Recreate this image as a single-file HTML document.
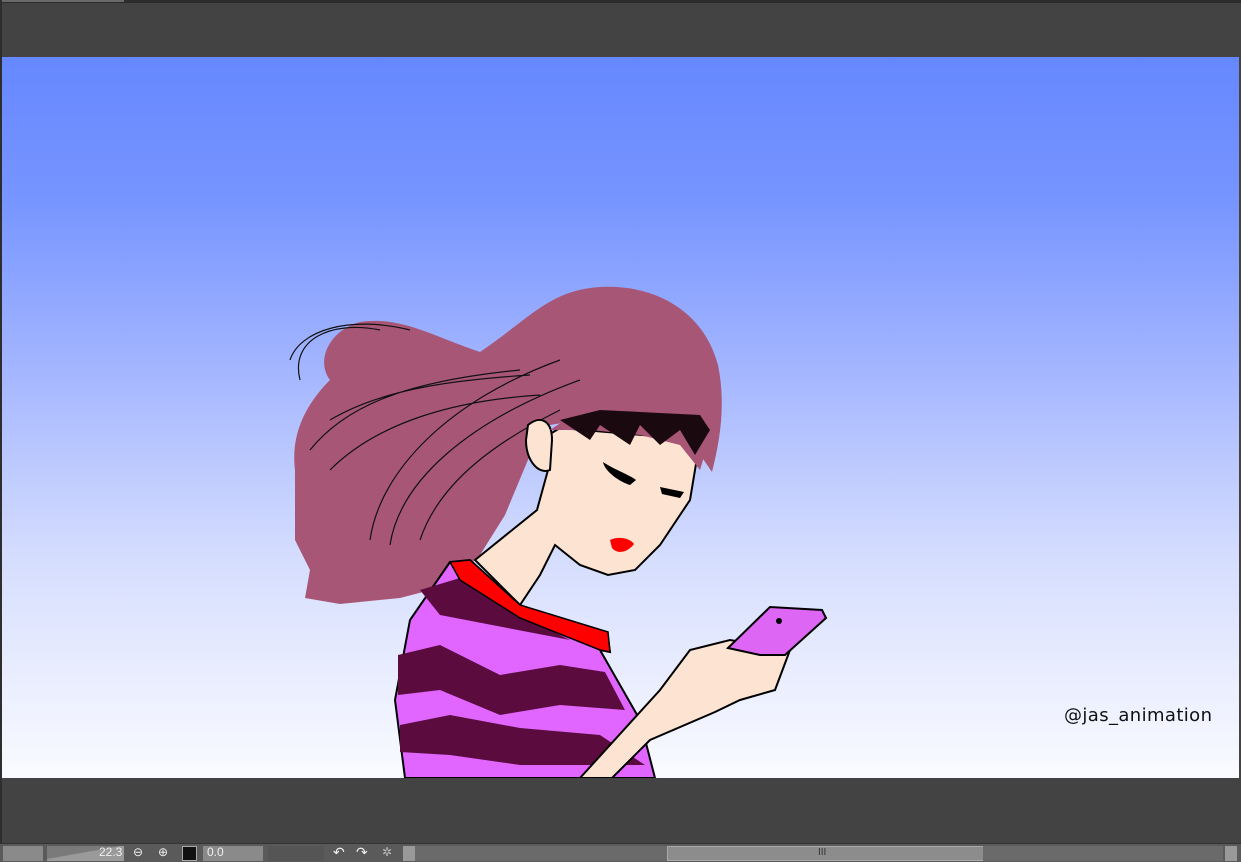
<!DOCTYPE html>
<html><head><meta charset="utf-8"><style>
html,body{margin:0;padding:0;width:1241px;height:861px;overflow:hidden;background:#434343;font-family:"Liberation Sans",sans-serif}
#top{position:absolute;left:0;top:0;width:1241px;height:3px;background:#2c2c2c}
#top i{position:absolute;left:2px;top:0;width:122px;height:2px;background:#6a6a6a}
#lb{position:absolute;left:0;top:0;width:2px;height:861px;background:#2e2e2e}
#canvas{position:absolute;left:2px;top:57px;width:1237px;height:721px;background:linear-gradient(#6688ff 0%,#7795ff 20%,#a7b8ff 45%,#d6defe 70%,#fafbff 100%);overflow:hidden}
#tb{position:absolute;left:0;top:843px;width:1241px;height:18px;background:#5a5a5a;border-top:1px solid #333}
.b{position:absolute;top:2px;height:15px;background:#8a8a8a}
.t{position:absolute;top:1px;font-size:12px;color:#f0f0f0}
</style></head><body>
<div id="top"><i></i></div><div id="lb"></div>
<div id="canvas">
<svg width="1237" height="721" viewBox="2 57 1237 721" style="position:absolute;left:0;top:0">
<path d="M295,470 C290,430 310,400 330,380 C315,360 330,330 360,322 C400,316 430,335 480,352 C530,318 550,290 600,287 C660,284 705,315 718,365 C726,405 720,440 712,472 L690,440 L640,430 L580,420 L550,425 L530,455 L505,515 L480,555 L450,585 L400,598 L340,604 L305,598 L310,570 L295,540 Z" fill="#a85676"/>
<path d="M300,380 C290,340 330,320 380,330 M290,360 C300,330 350,315 410,330 M310,450 C350,400 420,380 520,370 M370,540 C380,470 450,400 560,360 M390,545 C400,480 470,420 580,380 M330,420 C380,390 450,380 530,375 M330,470 C380,420 460,400 540,395 M420,540 C440,480 500,440 560,410" fill="none" stroke="#111" stroke-width="1.2"/>
<path d="M475,560 L537,510 L548,470 L540,440 L560,428 L700,440 L690,500 L660,545 L635,570 L608,575 L580,565 L555,545 L540,575 L520,605 Z" fill="#fde3d2" stroke="#000" stroke-width="2"/>
<path d="M528,425 C540,415 552,420 552,440 L550,470 C538,475 526,460 526,440 Z" fill="#fde3d2" stroke="#000" stroke-width="2"/>
<path d="M550,430 L580,410 L630,405 L690,415 L712,430 L700,470 L680,445 L640,435 L590,430 Z" fill="#a85676"/>
<path d="M560,420 L590,440 L600,425 L630,445 L640,425 L660,445 L680,430 L695,455 L710,430 L700,415 L600,410 Z" fill="#1a0a10"/>
<path d="M603,462 C615,470 630,475 636,480 L630,485 C620,482 605,472 603,462 Z" fill="#000"/>
<path d="M660,487 L684,492 L680,498 L662,494 Z" fill="#000"/>
<path d="M610,540 C618,536 630,538 634,544 C628,552 618,555 612,548 Z" fill="#f00"/>
<path d="M450,562 L470,560 L520,605 L608,638 L610,652 L600,650 L640,720 L655,778 L405,778 L395,700 L410,620 Z" fill="#e066ff" stroke="#000" stroke-width="2"/>
<path d="M420,590 L470,575 L520,615 L570,640 L440,615 Z M398,655 L440,645 L500,675 L560,665 L605,672 L625,710 L560,705 L500,715 L440,690 L398,695 Z M400,725 L450,715 L520,728 L600,735 L645,765 L520,765 L450,755 L400,752 Z" fill="#5c0b3e"/>
<path d="M450,562 L470,560 L520,605 L608,632 L610,652 L600,650 L520,618 L460,580 Z" fill="#f00" stroke="#000" stroke-width="1.5"/>
<path d="M580,778 L660,690 L690,650 L730,640 L790,650 L775,690 L740,700 L715,712 L650,740 L612,778 Z" fill="#fde3d2" stroke="#000" stroke-width="2"/>
<path d="M728,648 L770,607 L822,610 L826,618 L785,655 L760,655 Z" fill="#de66f4" stroke="#000" stroke-width="2"/>
<circle cx="779" cy="621" r="3" fill="#000"/>
<text x="1064" y="721" font-family="DejaVu Sans,sans-serif" font-size="18" fill="#111" textLength="148">@jas_animation</text>
</svg>
</div>
<div id="tb">
<div class="b" style="left:3px;width:40px"></div>
<div class="b" style="left:47px;width:77px;background:linear-gradient(170deg,#7a7a7a 45%,#9a9a9a 46%)"></div>
<span class="t" style="left:99px">22.3</span>
<span class="t" style="left:133px">⊖</span><span class="t" style="left:158px">⊕</span>
<div style="position:absolute;left:182px;top:2px;width:13px;height:13px;background:#111;border:1px solid #aaa"></div>
<div class="b" style="left:203px;width:60px"></div><span class="t" style="left:207px">0.0</span>
<div class="b" style="left:268px;width:56px;background:#555"></div>
<span class="t" style="left:333px;font-size:14px;top:0">↶</span><span class="t" style="left:356px;font-size:14px;top:0">↷</span><span class="t" style="left:382px;color:#bbb">✲</span>
<div class="b" style="left:403px;width:12px;background:#999"></div>
<div class="b" style="left:415px;width:252px;background:#6a6a6a"></div>
<div class="b" style="left:667px;width:315px;background:#8c8c8c;border:1px solid #aaa;height:13px"><span style="position:absolute;left:150px;top:0;font-size:10px;color:#333">III</span></div>
<div class="b" style="left:983px;width:240px;background:#6a6a6a"></div>
<div class="b" style="left:1225px;width:12px;background:#999"></div>
</div>
</body></html>
